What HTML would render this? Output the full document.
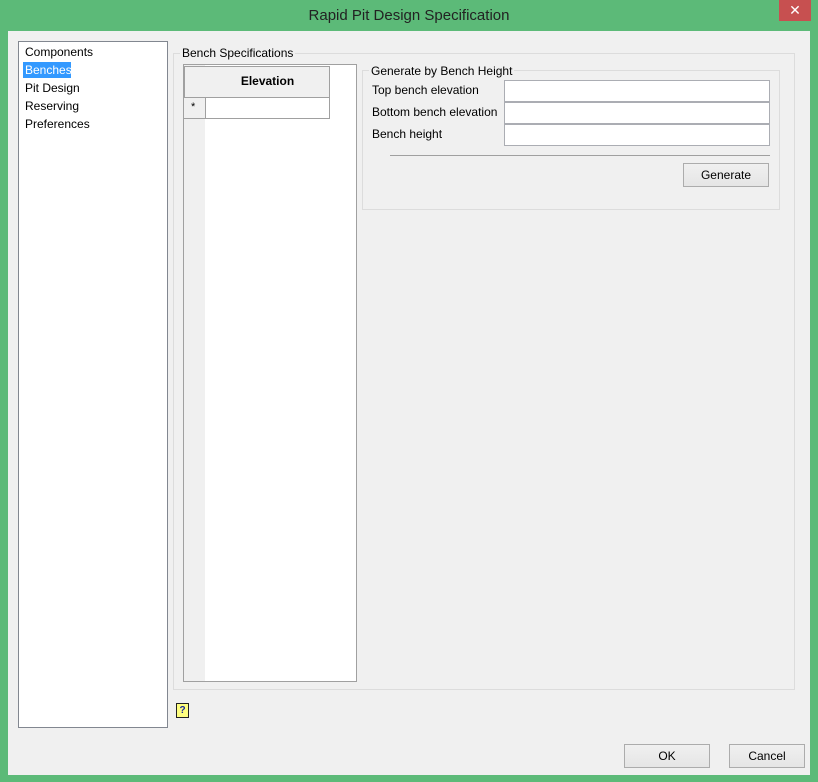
<!DOCTYPE html>
<html><head><style>
*{margin:0;padding:0;box-sizing:border-box}
body{width:818px;height:782px;background:#5cba78;font-family:"Liberation Sans",sans-serif;font-size:12px;color:#000;position:relative;overflow:hidden}
.a{position:absolute}
.t{font-size:15px;color:#222;left:0;width:818px;text-align:center;top:7px}
.btn{border:1px solid #acacac;background:linear-gradient(#f0f0f0,#e5e5e5);text-align:center;line-height:22px}
.inp{background:#fff;border:1px solid #abadb3}
</style></head><body>
<div class="a t">Rapid Pit Design Specification</div>
<div class="a" style="left:779px;top:0;width:32px;height:21px;background:#c75050;color:#fff;text-align:center;font-size:14px;line-height:21px">✕</div>
<div class="a" style="left:8px;top:31px;width:802px;height:744px;background:#f0f0f0"></div>
<div class="a" style="left:18px;top:41px;width:150px;height:687px;background:#fff;border:1px solid #828790"></div>
<div class="a" style="left:25px;top:45px">Components</div>
<div class="a" style="left:23px;top:62px;width:48px;height:16px;background:#3399ff"></div>
<div class="a" style="left:25px;top:63px;color:#fff">Benches</div>
<div class="a" style="left:25px;top:81px">Pit Design</div>
<div class="a" style="left:25px;top:99px">Reserving</div>
<div class="a" style="left:25px;top:117px">Preferences</div>
<div class="a" style="left:173px;top:53px;width:622px;height:637px;border:1px solid #dcdcdc"></div>
<div class="a" style="left:180px;top:46px;background:#f0f0f0;padding:0 2px">Bench Specifications</div>
<div class="a" style="left:183px;top:64px;width:174px;height:618px;background:#fff;border:1px solid #a0a0a0"></div>
<div class="a" style="left:184px;top:65px;width:21px;height:616px;background:#f0f0f0"></div>
<div class="a" style="left:184px;top:66px;width:146px;height:53px;border:1px solid #a0a0a0"></div>
<div class="a" style="left:205px;top:66px;width:1px;height:53px;background:#a0a0a0"></div>
<div class="a" style="left:184px;top:97px;width:146px;height:1px;background:#a0a0a0"></div>
<div class="a" style="left:205px;top:67px;width:124px;height:30px;background:#f0f0f0"></div>
<div class="a" style="left:205px;top:74px;width:125px;text-align:center;font-weight:bold">Elevation</div>
<div class="a" style="left:184px;top:98px;width:21px;height:20px;background:#f0f0f0"></div>
<div class="a" style="left:191px;top:101px;font-size:11px">*</div>
<div class="a" style="left:206px;top:98px;width:123px;height:20px;background:#fff"></div>
<div class="a" style="left:362px;top:70px;width:418px;height:140px;border:1px solid #dcdcdc"></div>
<div class="a" style="left:369px;top:64px;background:#f0f0f0;padding:0 2px">Generate by Bench Height</div>
<div class="a" style="left:372px;top:83px">Top bench elevation</div>
<div class="a" style="left:372px;top:105px">Bottom bench elevation</div>
<div class="a" style="left:372px;top:127px">Bench height</div>
<div class="a inp" style="left:504px;top:80px;width:266px;height:22px"></div>
<div class="a inp" style="left:504px;top:102px;width:266px;height:22px"></div>
<div class="a inp" style="left:504px;top:124px;width:266px;height:22px"></div>
<div class="a" style="left:390px;top:155px;width:380px;height:1px;background:#a0a0a0"></div>
<div class="a btn" style="left:683px;top:163px;width:86px;height:24px">Generate</div>
<div class="a" style="left:176px;top:703px;width:13px;height:15px;background:#ffff80;border:1px solid #222;font-size:10px;font-weight:bold;color:#1a2a9a;text-align:center;line-height:13px">?</div>
<div class="a btn" style="left:624px;top:744px;width:86px;height:24px">OK</div>
<div class="a btn" style="left:729px;top:744px;width:76px;height:24px">Cancel</div>
</body></html>
